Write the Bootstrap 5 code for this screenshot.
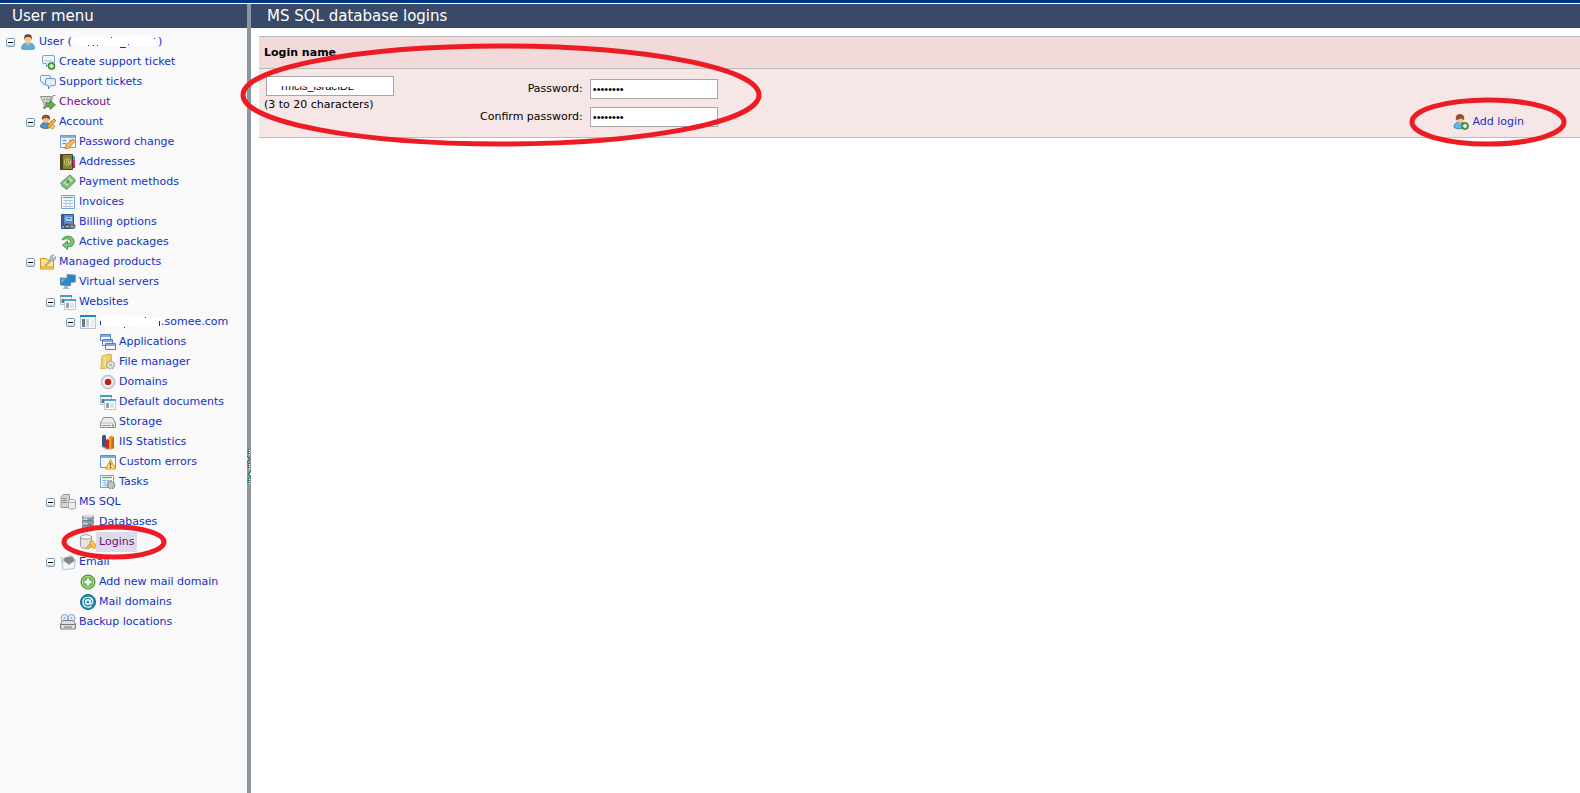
<!DOCTYPE html>
<html lang="en">
<head>
<meta charset="utf-8">
<meta name="viewport" content="width=device-width, initial-scale=1">
<title>MS SQL database logins</title>
<link rel="stylesheet" href="https://cdn.jsdelivr.net/npm/bootstrap@5.3.0/dist/css/bootstrap.min.css">
<style>
body{font-family:Verdana,"DejaVu Sans",sans-serif;font-size:11px;line-height:20px;color:#000;background:#fff}
a{color:#1230c8;text-decoration:none}
a:hover{text-decoration:underline}
a.seen{color:#7b0a7b}
.topline{height:3px;background:#003580;margin-bottom:1px}
.bar-title{background:#384a68;color:#fff;font-size:15px;line-height:24px;font-weight:400}
.side{width:247px;background:#f9f9f9}
.splitter{width:4px;background:#8a979e;padding-top:136px}
.grip{width:4px}
.tree ul{padding-left:20px}
.tree .item{height:20px}
.toggle{width:20px;height:20px;border:0;padding:0 0 0 6px;background:none;line-height:0;text-align:left}
.toggle svg{width:9px;height:9px}
.blank{width:20px}
.ico{width:16px;height:16px;flex:none;margin-right:3px}
.current{background:#dcdce8;padding:0 3px;margin-left:-3px}
.logins th,.logins td{padding:0 5px;border:0}
.logins{border-top:1px solid #bbb;border-bottom:1px solid #bbb}
.logins th{background:#f2dada;height:32px;border-bottom:1px solid #bbb}
.logins td{background:#f6e6e6;height:69px}
.logins .name-col{width:216px;padding-top:7px}
.logins .add-col{padding-right:56px;padding-bottom:5px}
.name-box{margin-left:2px}
.field{width:128px;height:20px;border:1px solid #a6a6a6;background:#fff;padding:0 2px;font:11px/16px "Liberation Sans",sans-serif;border-radius:0;color:#000}
.hint{line-height:18px}
.pw-grid{display:grid;grid-template-columns:auto 128px;column-gap:7px;row-gap:8px;justify-content:start;justify-items:end}
.ring{position:absolute;fill:none;stroke:#ed1c24;stroke-width:5;pointer-events:none;z-index:5;max-width:none}
.ring-form{left:-11px;top:15px;width:522px;height:105px}
.ring-menu{left:-19px;top:-8px;width:106px;height:36px}
.ring-add{left:-45px;top:-15px;width:160px;height:50px}
.cover{left:2px;top:1px;width:120px;height:10px}
</style>
</head>
<body class="d-flex flex-column min-vh-100">

<svg class="d-none" xmlns="http://www.w3.org/2000/svg">
 <symbol id="minus" viewBox="0 0 9 9"><rect x=".5" y=".5" width="8" height="8" rx="1" fill="#fdfdfb" stroke="#7b9ab5"/><path d="M1 6.500h7v1.500H1z" fill="#d8d2c4"/><path d="M2 4.500h5" stroke="#000"/></symbol>
 <symbol id="user" viewBox="0 0 16 16"><path d="M1.500 15C1 11 4 9.500 6 9h4c3 .5 5 2 4.500 6-3 1-10 1-13 0z" fill="#5aaedd" stroke="#3c88b8" stroke-width=".6"/><path d="M6 8h4v2l-2 2-2-2z" fill="#e5ae82"/><ellipse cx="8" cy="5.200" rx="3.300" ry="4" fill="#f2c49c"/><path d="M4.500 6C3.500 2 5 .3 8 .3S12.500 2 11.500 6C11 3.500 10 3 8 3s-3 .5-3.500 3z" fill="#6d4526"/></symbol>
 <symbol id="plus-dot" viewBox="0 0 8 8"><circle cx="4" cy="4" r="3.500" fill="#59a83c" stroke="#2f7420" stroke-width=".8"/><path d="M4 2v4M2 4h4" stroke="#fff" stroke-width="1.400"/></symbol>
 <symbol id="ticket" viewBox="0 0 16 16"><path d="M4 1.500h9q1.500 0 1.500 1.500v5q0 1.500-1.500 1.500H9L6.500 13V9.500H4Q2.500 9.500 2.500 8V3Q2.500 1.500 4 1.500z" fill="#eef5fc" stroke="#7b9fc5"/><path d="M4 7h9" stroke="#c5dbf0" stroke-width="2"/><use href="#plus-dot" x="7.500" y="8" width="8" height="8"/></symbol>
 <symbol id="tickets" viewBox="0 0 16 16"><path d="M2 1.500h7q1.500 0 1.500 1.500v4q0 1.500-1.500 1.500H6L3.500 11 3 8.500Q.5 8.500.5 7V3Q.5 1.500 2 1.500z" fill="#eef5fc" stroke="#7b9fc5"/><path d="M7 4.500h7q1.500 0 1.500 1.500v4q0 1.500-1.500 1.500h-3L8.500 15v-3.500H7Q5.500 11.500 5.500 10V6Q5.500 4.500 7 4.500z" fill="#e2effb" stroke="#6c94c0"/></symbol>
 <symbol id="cart" viewBox="0 0 16 16"><path d="M.5 2.500h11L10 9H3.500zM15.500 1.500h-2.500L10.500 11H3" fill="#e4e4e4" stroke="#909090"/><path d="M4 3l1 6M7 3v6M9.500 3L9 9M2 5.500h9" stroke="#999" stroke-width=".7"/><circle cx="4.500" cy="13.500" r="1.300" fill="#666"/><path d="M6 9h4V6.500l5.500 4.500-5.500 4.500V13H6z" fill="#65ad4c" stroke="#397c29" stroke-width=".7"/></symbol>
 <symbol id="account" viewBox="0 0 16 16"><path d="M.5 13c0-4 3-4.500 5-4.500 3 0 5 1.500 4.500 5-3 1.500-7 1.500-9.500-.5z" fill="#4d91cf" stroke="#2c629c" stroke-width=".7"/><circle cx="6" cy="5.500" r="3.200" fill="#f3bd8b"/><path d="M2 6C1 2 3.500.5 6.500.8 10 1 11 4 9.500 6 8.500 4 5 3 2 6z" fill="#965323"/><path d="M10 7l5 5-2 3-5-2" fill="#f6c87c" stroke="#c98b34" stroke-width=".7"/><path d="M7 15l1-4 6-6 1.800 1.800-6 6z" fill="#f9b84a" stroke="#ae6914" stroke-width=".9"/></symbol>
 <symbol id="password" viewBox="0 0 16 16"><path d="M.5 1.500h15v12H.5z" fill="#f2f7fc" stroke="#6e9ccb"/><path d="M1 2h14v2H1z" fill="#81afe0"/><path d="M2.500 6.500h4M2.500 9.500h4M9 6.500h4" stroke="#7f9fc0" stroke-width="1.300"/><path d="M5 15l1-4 7-6 2 2-6 7z" fill="#f8bd51" stroke="#a96f1d" stroke-width=".7"/></symbol>
 <symbol id="book" viewBox="0 0 16 16"><path d="M.5.500h12v15H.5z" fill="#8a8136" stroke="#4b431c"/><path d="M1 1h2v14H1z" fill="#4d4420"/><path d="M13 2h2v4h-2z" fill="#1cb1e6"/><path d="M13 6h2v4h-2z" fill="#e81bd1"/><path d="M13 10h2v4h-2z" fill="#e71e42"/><circle cx="7.500" cy="8" r="3.300" fill="none" stroke="#d0c379"/><circle cx="7.500" cy="8" r="1.200" fill="none" stroke="#d0c379"/><path d="M9 6.500v3h2" fill="none" stroke="#d0c379" stroke-width=".8"/></symbol>
 <symbol id="money" viewBox="0 0 16 16"><path d="M.5 9L10 1l5.500 5-9 9z" fill="#8bc68a" stroke="#4f964f"/><path d="M2.500 9L10 3l3.500 3.200L7 12.500z" fill="#b5ddb0" stroke="#69a769" stroke-width=".6"/><circle cx="8" cy="7.700" r="2" fill="#629f60"/><path d="M1 11l5.500 4.500 9-8" fill="none" stroke="#57a457"/></symbol>
 <symbol id="invoice" viewBox="0 0 16 16"><path d="M1.500 1.500h13v13h-13z" fill="#fff" stroke="#77a5d9"/><path d="M3 3.500h10" stroke="#6cb17b" stroke-width="1.500"/><path d="M3 6.500h10M3 9.500h10M3 12.500h10M6 5.500v8M10 5.500v8" stroke="#a8c2df"/></symbol>
 <symbol id="billing" viewBox="0 0 16 16"><path d="M1.500.500h12v14h-12z" fill="#5d90c9" stroke="#29578e"/><path d="M2 1h2v13H2z" fill="#315f9e"/><path d="M5.500 3h6.500v4H5.500z" fill="#a9c9e9"/><path d="M7 4.500h3.500" stroke="#42709e"/><path d="M2 13h12" stroke="#d7e4f0"/><rect x="4.800" y="10.500" width="5.200" height="3.600" rx="1.800" fill="none" stroke="#4c4c4c" stroke-width="1.400"/><rect x="9.600" y="10.500" width="5.200" height="3.600" rx="1.800" fill="none" stroke="#6b6b6b" stroke-width="1.400"/></symbol>
 <symbol id="active" viewBox="0 0 16 16"><path d="M2 6C4 .500 14 1 14 7.500c0 4-3 5.500-6.500 5.300v2.700L2.500 11 7.500 7v2.500c2 .3 3.200-.6 3-2C10.300 4.500 6 4 2 6z" fill="#7fc479" stroke="#378a3d" stroke-width=".9"/></symbol>
 <symbol id="products" viewBox="0 0 16 16"><path d="M.5 4.500h6l1 1.500h6v9H.5z" fill="#fde398" stroke="#d5961d"/><path d="M1 12h12v2.500H1z" fill="#f2b744"/><path d="M5 11l5-5C9.500 3 11 .5 14 1l-2 2 1.500 1.500 2-2c.5 3-1.500 5-4 4.500L6 12z" fill="#bcc2c7" stroke="#757d83" stroke-width=".6"/></symbol>
 <symbol id="servers" viewBox="0 0 16 16"><path d="M7 .5l8.500.5v7L7 9z" fill="#2283ce" stroke="#76a5c4"/><path d="M.5 4l10 .5v7L.5 11z" fill="#198cdb" stroke="#648294"/><path d="M1.500 5l4 .2-4 4z" fill="#61b9ef"/><path d="M4 12h4v1.500l2 1.500H2.500L4 13.500z" fill="#b0b7bc"/></symbol>
 <symbol id="windows" viewBox="0 0 16 16"><path d="M.5 1.500h11v9H.5z" fill="#f4f7f9" stroke="#aebdc8"/><path d="M0 1h12v2H0z" fill="#4b9acb"/><path d="M1.500 5H4v4H1.500z" fill="#65737d"/><path d="M4.500 5.500h11v10h-11z" fill="#fff" stroke="#b8c7d2"/><path d="M4 5h12v2H4z" fill="#4ba6d6"/><path d="M6 9h3v5H6z" fill="#96a2aa"/><path d="M10 9h4v5h-4z" fill="#dde3e7"/></symbol>
 <symbol id="site" viewBox="0 0 16 16"><path d="M.5 1.500h15v13H.5z" fill="#f9fbfc" stroke="#b2c4d3"/><path d="M0 1h16v2H0z" fill="#2385bd"/><path d="M2 5h3v8H2z" fill="#6d7881"/><path d="M6 5h3v8H6z" fill="#cbd0d4"/><path d="M11 5h3v8h-3z" fill="#e6e9eb"/></symbol>
 <symbol id="apps" viewBox="0 0 16 16"><g fill="#f5f9ff" stroke="#557fbd"><path d="M.5.500h10v6H.5zM2.500 5.500h10v6h-10zM5.500 9.500h10v6h-10z"/></g><path d="M1 2h9M3 7h9M6 11h9" stroke="#84abe0" stroke-width="2"/></symbol>
 <symbol id="files" viewBox="0 0 16 16"><path d="M1 13l1-11 5-1.500h4.500v11L5 14.500H.5z" fill="#f1cf65" stroke="#d5a73b" stroke-width=".8"/><path d="M2.500 3L5 4v9" stroke="#fff0b2" fill="none"/><circle cx="10.500" cy="11" r="3.700" fill="#eee" stroke="#a6a6a6" stroke-width="1.800" stroke-dasharray="1.800 .7"/><circle cx="10.500" cy="11" r="1.300" fill="#f1cf65" stroke="#999" stroke-width=".6"/></symbol>
 <symbol id="domain" viewBox="0 0 16 16"><circle cx="8" cy="8" r="6.800" fill="#d5dade" stroke="#b4bcc1"/><circle cx="8" cy="8" r="4.800" fill="#fff"/><circle cx="8" cy="8" r="3.300" fill="#c51914"/></symbol>
 <symbol id="storage" viewBox="0 0 16 16"><path d="M.5 9l3-5.500h9l3 5.500v4.500H.5z" fill="#eee" stroke="#8d8d8d"/><path d="M1 9h14" stroke="#bbb"/><path d="M2 11.500h9" stroke="#999"/><path d="M12 10.500h2v2h-2z" fill="#3fbd38"/></symbol>
 <symbol id="stats" viewBox="0 0 16 16"><path d="M1 12l5-2 10 3-5 3H5z" fill="#cbd1d8"/><path d="M2 2l2-1.500L6 2v11l-2 .5L2 12z" fill="#365783"/><path d="M5.500 6l2-1 2 1v8.500l-2 .5-2-1z" fill="#d02c19"/><path d="M9 3l2.500-1.500L14 3v11l-2.500 1L9 14z" fill="#f29b27"/><path d="M11.500 4v11L14 14V3z" fill="#c66c13"/></symbol>
 <symbol id="errors" viewBox="0 0 16 16"><path d="M.5 1.500h15v12H.5z" fill="#f5f9fe" stroke="#5f92cf"/><path d="M1 2h14v2H1z" fill="#79a9df"/><path d="M10.500 5.500l5 9.500h-10z" fill="#ffdc70" stroke="#d59c28"/><path d="M10.500 8.500v3M10.500 12.500V14" stroke="#68501b" stroke-width="1.300"/></symbol>
 <symbol id="tasks" viewBox="0 0 16 16"><path d="M.5 1.500h13v12H.5z" fill="#fff" stroke="#78a0cd"/><path d="M2 3.500h10" stroke="#6ba982" stroke-width="1.500"/><path d="M2 6.500h10M2 9h10M2 11.500h8M5 5.500v7M8 5.500v7" stroke="#9fbad8"/><circle cx="11" cy="11" r="3.400" fill="#ddd" stroke="#808890" stroke-width="1.800" stroke-dasharray="1.800 .7"/><circle cx="11" cy="11" r="1.200" fill="#fff" stroke="#777" stroke-width=".6"/></symbol>
 <symbol id="sql" viewBox="0 0 16 16"><path d="M1 3l2-2.500h6.500v13H1z" fill="#d0d2d3" stroke="#96999b"/><path d="M2.500 4.500h4M2.500 6.500h4M2.500 8.500h4" stroke="#888"/><path d="M8.500 7v7c1 1.500 6 1.500 7 0V7z" fill="#eee" stroke="#a0a4a8"/><ellipse cx="12" cy="7" rx="3.500" ry="1.600" fill="#fff" stroke="#a0a4a8"/></symbol>
 <symbol id="databases" viewBox="0 0 16 16"><g fill="#8c9ba6" stroke="#60717d" stroke-width=".7"><path d="M2.500 2v3c2 2 9 2 11 0V2zM2.500 6.500v3c2 2 9 2 11 0v-3zM2.500 11v3c2 2 9 2 11 0v-3z"/></g><path d="M3.500 4.500q2 1 4 1M3.500 9q2 1 4 1M3.500 13.500q2 1 4 1" fill="none" stroke="#dae2e6" stroke-width="1.500"/><ellipse cx="8" cy="2" rx="5.500" ry="1.500" fill="#d3dce2"/></symbol>
 <symbol id="logins" viewBox="0 0 16 16"><path d="M.5 3v9.500c2 2.500 9 2.500 11 0V3z" fill="#e4e4e4" stroke="#999"/><ellipse cx="6" cy="3" rx="5.500" ry="2.200" fill="#fff" stroke="#999"/><path d="M7 14.500l4-4" stroke="#bd841e" stroke-width="3"/><path d="M7 14.500l4-4" stroke="#ffd15b" stroke-width="1.600"/><path d="M9.500 8l3-1.500 3 4-.5 4-3-1z" fill="#ffc844" stroke="#bd841e" stroke-width=".7"/></symbol>
 <symbol id="email" viewBox="0 0 16 16"><path d="M1 3l3 1.500L11 1l4.500 5L14 14.500 3 15.500z" fill="#e8ebed" stroke="#c3cacf"/><path d="M3 6l2-2.500L12 2.500l3 4-6 4z" fill="#7f898f"/><path d="M2.500 6.500L9 11l6-4.500-1 8-11 1z" fill="#f7f8f9" stroke="#b7c0c6" stroke-width=".7"/></symbol>
 <symbol id="add" viewBox="0 0 16 16"><circle cx="8" cy="8" r="7" fill="#69b84b" stroke="#3c8b2d"/><circle cx="8" cy="8" r="5.700" fill="none" stroke="#b5dfa2"/><path d="M8 4.500v7M4.500 8h7" stroke="#fff" stroke-width="2.400"/></symbol>
 <symbol id="mail" viewBox="0 0 16 16"><circle cx="8" cy="8" r="7.500" fill="#1b8dae" stroke="#126781"/><circle cx="7.800" cy="8" r="2.200" fill="none" stroke="#fff" stroke-width="1.400"/><path d="M10.800 5.500L10 9.500c.2 1.500 2.800.5 2.800-2C12.500 1.500 3 2 3 8.200c0 5 5.500 5.800 8.500 3.800" fill="none" stroke="#fff" stroke-width="1.200"/></symbol>
 <symbol id="backup" viewBox="0 0 16 16"><circle cx="4.500" cy="4" r="3.500" fill="#e4f0f9" stroke="#87a4bc"/><circle cx="11.500" cy="4" r="3.500" fill="#e4f0f9" stroke="#87a4bc"/><circle cx="4.500" cy="4" r="1" fill="#8ab5d7"/><circle cx="11.500" cy="4" r="1" fill="#8ab5d7"/><path d="M.5 10l2-3.500h11l2 3.500v5H.5z" fill="#dde0e3" stroke="#7b8389"/><path d="M1 10.500h14M4 13h8" stroke="#737b81"/></symbol>
 <symbol id="adduser" viewBox="0 0 16 16"><path d="M1 13.500C.5 10 3 8.500 5 8.200h4c3 .5 4.500 2.300 4 5.500-4 1.500-9 1.500-12-.2z" fill="#66b3ee" stroke="#3977b1" stroke-width=".8"/><circle cx="7" cy="5.500" r="3.300" fill="#f5c398"/><path d="M3.500 6C2.500 2 4 .5 7 .5S11.500 2 10.500 6C9.500 4 8 3.300 3.500 6z" fill="#955228" stroke="#643114" stroke-width=".5"/><use href="#plus-dot" x="8" y="8" width="8" height="8"/></symbol>
</svg>

<div class="topline"></div>
<div class="d-flex flex-grow-1">
 <nav class="side flex-shrink-0" aria-label="User menu">
  <h1 class="bar-title m-0 ps-2"><span class="ps-1">User menu</span></h1>
  <div class="tree pt-1">
   <div class="item d-flex align-items-center"><button class="toggle" aria-label="Collapse User"><svg><use href="#minus"/></svg></button><svg class="ico"><use href="#user"/></svg><a href="#" class="d-flex align-items-center">User (<svg width="86" height="14" viewBox="0 0 86 14"><path d="M1 3q8-2 20-1 30-2 63 0v9q-30 1-83-1z" fill="#fff"/><path d="M16 10.500h1M21 10.500h1M25 10.500h1M48 12.500h6M39 2.500h1M56 9.500h1M82 3.500h1" stroke="#1230c8"/></svg>)</a></div>
   <ul class="list-unstyled m-0">
    <li><div class="item d-flex align-items-center"><span class="blank"></span><svg class="ico"><use href="#ticket"/></svg><a href="#">Create support ticket</a></div></li>
    <li><div class="item d-flex align-items-center"><span class="blank"></span><svg class="ico"><use href="#tickets"/></svg><a href="#">Support tickets</a></div></li>
    <li><div class="item d-flex align-items-center"><span class="blank"></span><svg class="ico"><use href="#cart"/></svg><a href="#" class="seen">Checkout</a></div></li>
    <li><div class="item d-flex align-items-center"><button class="toggle" aria-label="Collapse Account"><svg><use href="#minus"/></svg></button><svg class="ico"><use href="#account"/></svg><a href="#">Account</a></div>
     <ul class="list-unstyled m-0">
      <li><div class="item d-flex align-items-center"><span class="blank"></span><svg class="ico"><use href="#password"/></svg><a href="#">Password change</a></div></li>
      <li><div class="item d-flex align-items-center"><span class="blank"></span><svg class="ico"><use href="#book"/></svg><a href="#">Addresses</a></div></li>
      <li><div class="item d-flex align-items-center"><span class="blank"></span><svg class="ico"><use href="#money"/></svg><a href="#">Payment methods</a></div></li>
      <li><div class="item d-flex align-items-center"><span class="blank"></span><svg class="ico"><use href="#invoice"/></svg><a href="#">Invoices</a></div></li>
      <li><div class="item d-flex align-items-center"><span class="blank"></span><svg class="ico"><use href="#billing"/></svg><a href="#">Billing options</a></div></li>
      <li><div class="item d-flex align-items-center"><span class="blank"></span><svg class="ico"><use href="#active"/></svg><a href="#">Active packages</a></div></li>
     </ul></li>
    <li><div class="item d-flex align-items-center"><button class="toggle" aria-label="Collapse Managed products"><svg><use href="#minus"/></svg></button><svg class="ico"><use href="#products"/></svg><a href="#">Managed products</a></div>
     <ul class="list-unstyled m-0">
      <li><div class="item d-flex align-items-center"><span class="blank"></span><svg class="ico"><use href="#servers"/></svg><a href="#">Virtual servers</a></div></li>
      <li><div class="item d-flex align-items-center"><button class="toggle" aria-label="Collapse Websites"><svg><use href="#minus"/></svg></button><svg class="ico"><use href="#windows"/></svg><a href="#">Websites</a></div>
       <ul class="list-unstyled m-0">
        <li><div class="item d-flex align-items-center"><button class="toggle" aria-label="Collapse site"><svg><use href="#minus"/></svg></button><svg class="ico"><use href="#site"/></svg><a href="#" class="d-flex align-items-center"><svg width="62" height="14" viewBox="0 0 62 14"><path d="M2 2q14-2 58 1v9q-20 1-30-1l-28-1z" fill="#fff"/><path d="M1.500 6v4M25 12.500h1M46 2.500h1M60.500 6v5" stroke="#1230c8"/></svg>.somee.com</a></div>
         <ul class="list-unstyled m-0">
          <li><div class="item d-flex align-items-center"><span class="blank"></span><svg class="ico"><use href="#apps"/></svg><a href="#">Applications</a></div></li>
          <li><div class="item d-flex align-items-center"><span class="blank"></span><svg class="ico"><use href="#files"/></svg><a href="#">File manager</a></div></li>
          <li><div class="item d-flex align-items-center"><span class="blank"></span><svg class="ico"><use href="#domain"/></svg><a href="#">Domains</a></div></li>
          <li><div class="item d-flex align-items-center"><span class="blank"></span><svg class="ico"><use href="#windows"/></svg><a href="#">Default documents</a></div></li>
          <li><div class="item d-flex align-items-center"><span class="blank"></span><svg class="ico"><use href="#storage"/></svg><a href="#">Storage</a></div></li>
          <li><div class="item d-flex align-items-center"><span class="blank"></span><svg class="ico"><use href="#stats"/></svg><a href="#">IIS Statistics</a></div></li>
          <li><div class="item d-flex align-items-center"><span class="blank"></span><svg class="ico"><use href="#errors"/></svg><a href="#">Custom errors</a></div></li>
          <li><div class="item d-flex align-items-center"><span class="blank"></span><svg class="ico"><use href="#tasks"/></svg><a href="#">Tasks</a></div></li>
         </ul></li>
       </ul></li>
      <li><div class="item d-flex align-items-center"><button class="toggle" aria-label="Collapse MS SQL"><svg><use href="#minus"/></svg></button><svg class="ico"><use href="#sql"/></svg><a href="#">MS SQL</a></div>
       <ul class="list-unstyled m-0">
        <li><div class="item d-flex align-items-center"><span class="blank"></span><svg class="ico"><use href="#databases"/></svg><a href="#">Databases</a></div></li>
        <li><div class="item d-flex align-items-center"><span class="blank"></span><span class="d-flex align-items-center position-relative"><svg class="ico"><use href="#logins"/></svg><a href="#" class="seen current">Logins</a><svg class="ring ring-menu"><ellipse cx="53" cy="18" rx="50" ry="15"/></svg></span></div></li>
       </ul></li>
      <li><div class="item d-flex align-items-center"><button class="toggle" aria-label="Collapse Email"><svg><use href="#minus"/></svg></button><svg class="ico"><use href="#email"/></svg><a href="#">Email</a></div>
       <ul class="list-unstyled m-0">
        <li><div class="item d-flex align-items-center"><span class="blank"></span><svg class="ico"><use href="#add"/></svg><a href="#">Add new mail domain</a></div></li>
        <li><div class="item d-flex align-items-center"><span class="blank"></span><svg class="ico"><use href="#mail"/></svg><a href="#">Mail domains</a></div></li>
       </ul></li>
      <li><div class="item d-flex align-items-center"><span class="blank"></span><svg class="ico"><use href="#backup"/></svg><a href="#">Backup locations</a></div></li>
     </ul></li>
   </ul>
  </div>
 </nav>

 <div class="splitter flex-shrink-0 d-flex align-items-center">
  <svg class="grip" height="38" viewBox="0 0 4 38"><path d="M1.500 1v6M1.500 15v6M1.500 30v6" stroke="#167050" stroke-width="2" stroke-dasharray="1 1"/><path d="M2.500 2v6M2.500 16v6M2.500 31v6" stroke="#fff" stroke-dasharray="1 1"/><path d="M0 8l3 3-3 3M4 23l-3 3 3 3" fill="none" stroke="#167050"/><path d="M0 10v2M3.500 25v2" stroke="#fff"/></svg>
 </div>

 <main class="flex-grow-1">
  <h2 class="bar-title m-0 ps-3">MS SQL database logins</h2>
  <form class="position-relative pt-2 ps-2" onsubmit="return false">
   <table class="logins w-100">
    <thead><tr><th colspan="3" scope="colgroup"><label for="login">Login name</label></th></tr></thead>
    <tbody><tr>
     <td class="name-col align-top">
      <div class="name-box position-relative">
       <input class="field d-block" id="login" type="text" value="    rmcis_israelDL">
       <svg class="cover position-absolute"><path d="M0 0h118v10H60L10 9H0z" fill="#fff"/></svg>
      </div>
      <div class="hint">(3 to 20 characters)</div>
     </td>
     <td class="align-middle">
      <div class="pw-grid">
       <label for="pw">Password:</label><input class="field" id="pw" type="password" value="password">
       <label for="pw2">Confirm password:</label><input class="field" id="pw2" type="password" value="password">
      </div>
     </td>
     <td class="add-col align-bottom">
      <div class="d-flex justify-content-end">
       <a href="#" class="d-flex align-items-center position-relative"><svg class="ico"><use href="#adduser"/></svg>Add login<svg class="ring ring-add"><ellipse cx="80" cy="25" rx="76" ry="22"/></svg></a>
      </div>
     </td>
    </tr></tbody>
   </table>
   <svg class="ring ring-form"><ellipse cx="261" cy="52" rx="258" ry="49"/></svg>
  </form>
 </main>
</div>
<script src="https://cdn.jsdelivr.net/npm/bootstrap@5.3.0/dist/js/bootstrap.bundle.min.js"></script>
</body>
</html>
